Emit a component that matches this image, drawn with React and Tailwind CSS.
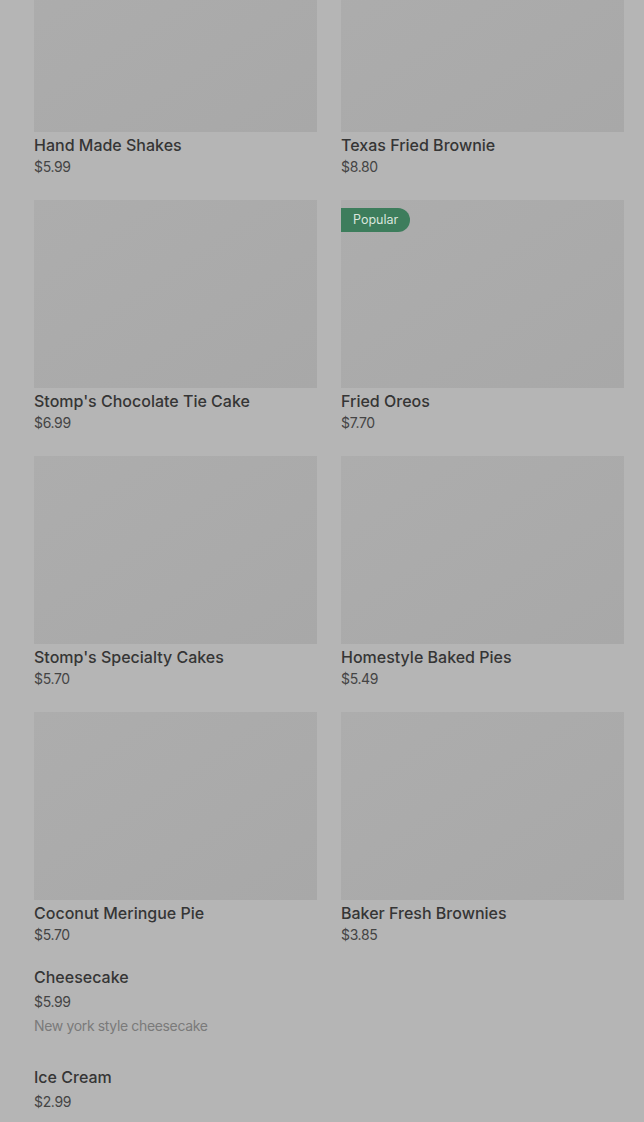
const cards = [
  { name: "Hand Made Shakes", price: "$5.99" },
  { name: "Texas Fried Brownie", price: "$8.80" },
  { name: "Stomp's Chocolate Tie Cake", price: "$6.99" },
  { name: "Fried Oreos", price: "$7.70", popular: true },
  { name: "Stomp's Specialty Cakes", price: "$5.70" },
  { name: "Homestyle Baked Pies", price: "$5.49" },
  { name: "Coconut Meringue Pie", price: "$5.70" },
  { name: "Baker Fresh Brownies", price: "$3.85" },
];

const plain = [
  { name: "Cheesecake", price: "$5.99", desc: "New york style cheesecake" },
  { name: "Ice Cream", price: "$2.99" },
];

function Card({ item }) {
  return (
    <div>
      <div className="relative h-[188px] bg-gradient-to-br from-[#adadad] to-[#a8a8a8]">
        {item.popular && (
          <span className="absolute left-0 top-2 h-6 pl-3 pr-3 flex items-center rounded-r-full bg-[#3d7d5c] text-[12.5px] text-[#d9e6de]">
            Popular
          </span>
        )}
      </div>
      <h3 className="mt-[1px] text-base leading-6 font-medium text-[#353535]">{item.name}</h3>
      <p className="text-sm leading-5 tracking-tight text-[#444444]">{item.price}</p>
    </div>
  );
}

export default function App() {
  return (
    <div className="min-h-[1122px] bg-[#b5b5b5] pl-[34px] pr-[20px] overflow-hidden" style={{ fontFamily: "Inter, 'Noto Sans', sans-serif" }}>
      <div className="grid grid-cols-2 gap-x-6 gap-y-[23px] -mt-[56px]">
        {cards.map((c) => (
          <Card key={c.name} item={c} />
        ))}
      </div>

      <div className="mt-[20px] flex flex-col gap-[29px]">
        {plain.map((p) => (
          <div key={p.name}>
            <h3 className="text-base leading-6 font-medium text-[#353535]">{p.name}</h3>
            <p className="mt-[3px] text-sm leading-5 tracking-tight text-[#444444]">{p.price}</p>
            {p.desc && <p className="mt-1 text-sm leading-5 tracking-tight text-[#7a7a7a]">{p.desc}</p>}
          </div>
        ))}
      </div>
    </div>
  );
}
